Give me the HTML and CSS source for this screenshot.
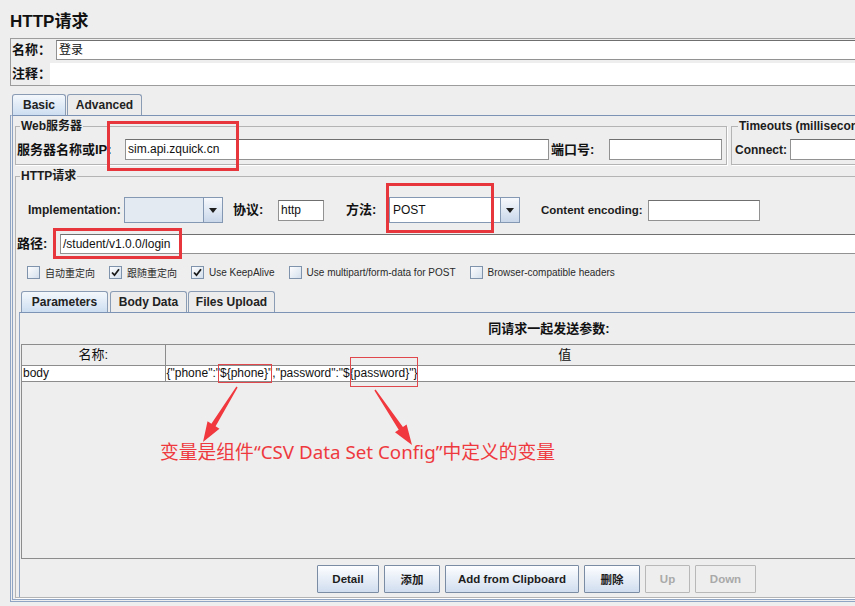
FILE: index.html
```html
<!DOCTYPE html>
<html lang="zh-CN">
<head>
<meta charset="utf-8">
<title>HTTP请求</title>
<link rel="stylesheet" href="styles.css">
</head>
<body>
<div class="app">
  <h1 class="title">HTTP请求</h1>
  <div class="namebox">
    <div class="nrow nrow-name"><span class="lbl lbl-name">名称：</span><div class="field field-name">登录</div></div>
    <div class="nrow nrow-note"><span class="lbl lbl-note">注释：</span><div class="field field-note"></div></div>
  </div>
  <div class="tabs main-tabs">
    <div class="tab active t-basic">Basic</div>
    <div class="tab t-adv">Advanced</div>
  </div>
  <div class="tabpanel">
    <div class="toprow">
      <fieldset class="fs fs-web">
        <legend>Web服务器</legend>
        <div class="row">
          <span class="lbl lbl-server">服务器名称或IP:</span>
          <div class="field field-server">sim.api.zquick.cn</div>
          <span class="lbl lbl-port">端口号:</span>
          <div class="field field-port"></div>
        </div>
      </fieldset>
      <fieldset class="fs fs-timeouts">
        <legend>Timeouts (milliseconds)</legend>
        <div class="row">
          <span class="lbl-en lbl-connect">Connect:</span>
          <div class="field field-connect"></div>
          <span class="lbl-en lbl-response">Response:</span>
          <div class="field field-connect"></div>
        </div>
      </fieldset>
    </div>
    <fieldset class="fs fs-http">
      <legend>HTTP请求</legend>
      <div class="impl-row">
        <span class="lbl-en lbl-impl">Implementation:</span>
        <div class="combo combo-impl"><div class="combo-field"></div><div class="combo-btn"><span class="caret"></span></div></div>
        <span class="lbl lbl-proto">协议:</span>
        <div class="field field-proto">http</div>
        <span class="lbl lbl-method">方法:</span>
        <div class="combo combo-method"><div class="combo-field">POST</div><div class="combo-btn"><span class="caret"></span></div></div>
        <span class="lbl-en lbl-enc">Content encoding:</span>
        <div class="field field-enc"></div>
      </div>
      <div class="path-row">
        <span class="lbl lbl-path">路径:</span>
        <div class="field field-path">/student/v1.0.0/login</div>
      </div>
      <div class="checks">
        <div class="chk"><span class="box"></span><span>自动重定向</span></div>
        <div class="chk"><span class="box"><svg width="9" height="9" viewBox="0 0 9 9"><path d="M1 4.5 L3.5 7.2 L8 1.2" fill="none" stroke="#1a1a1a" stroke-width="1.8"/></svg></span><span>跟随重定向</span></div>
        <div class="chk"><span class="box"><svg width="9" height="9" viewBox="0 0 9 9"><path d="M1 4.5 L3.5 7.2 L8 1.2" fill="none" stroke="#1a1a1a" stroke-width="1.8"/></svg></span><span>Use KeepAlive</span></div>
        <div class="chk"><span class="box"></span><span>Use multipart/form-data for POST</span></div>
        <div class="chk"><span class="box"></span><span>Browser-compatible headers</span></div>
      </div>
      <div class="tabs inner-tabs">
        <div class="tab active t-params">Parameters</div>
        <div class="tab t-body">Body Data</div>
        <div class="tab t-files">Files Upload</div>
      </div>
      <div class="innerpanel">
        <div class="param-title">同请求一起发送参数:</div>
        <div class="tablewrap">
          <table class="params">
            <colgroup><col class="c-name"><col></colgroup>
            <thead><tr><th>名称:</th><th>值</th></tr></thead>
            <tbody><tr><td>body</td><td>{"phone":"${phone}","password":"${password}"}</td></tr></tbody>
          </table>
        </div>
        <div class="buttons">
          <button type="button" class="btn btn-detail">Detail</button>
          <button type="button" class="btn btn-add">添加</button>
          <button type="button" class="btn btn-clip">Add from Clipboard</button>
          <button type="button" class="btn btn-del">删除</button>
          <button type="button" class="btn btn-up disabled">Up</button>
          <button type="button" class="btn btn-down disabled">Down</button>
        </div>
      </div>
    </fieldset>
  </div>
</div>
<svg class="marks" viewBox="0 0 855 606" xmlns="http://www.w3.org/2000/svg">
  <g fill="none" stroke="#e8363d" stroke-width="3">
    <rect x="108.5" y="122.5" width="129" height="47"/>
    <rect x="387.5" y="184.5" width="105" height="47"/>
    <rect x="54.5" y="229.5" width="126" height="28"/>
  </g>
  <g fill="none" stroke="#e0474d" stroke-width="1">
    <rect x="218.5" y="364.5" width="53" height="18"/>
    <rect x="350.5" y="357.5" width="67" height="29"/>
  </g>
  <g fill="#f0383e">
    <polygon points="237.6,387.4 215.6,426.3 219.45,428.7 203,442 207.55,421.3 211.4,423.7 236.4,386.6"/>
    <polygon points="375.6,389.6 402.9,427 406.6,424.5 412,445 395,432.3 398.7,429.8 374.4,390.4"/>
  </g>
</svg>
<div class="note">变量是组件“CSV Data Set Config”中定义的变量</div>
</body>
</html>
```
FILE: styles.css
```css
* { box-sizing: border-box; }
html, body { margin: 0; padding: 0; }
body {
  width: 855px;
  height: 606px;
  overflow: hidden;
  position: relative;
  background: #eeeeee;
  color: #1c1c1c;
  font-family: "Liberation Sans", "Noto Sans CJK SC", sans-serif;
  font-size: 12px;
}
.app { width: 1090px; }

.title {
  margin: 0;
  height: 38px;
  padding: 12px 0 0 10px;
  font-size: 17px;
  line-height: 20px;
  font-weight: bold;
  color: #111;
}

/* name / comment box */
.namebox {
  margin-left: 10px;
  border: 1px solid #9c9c9c;
  border-right: 0;
  padding-top: 1px;
}
.nrow { display: flex; align-items: center; }
.nrow-note { margin-top: 3px; }
.lbl {
  flex: none;
  font-weight: bold;
  font-size: 13px;
  line-height: 16px;
  white-space: nowrap;
  color: #111;
}
.lbl-en {
  flex: none;
  font-weight: bold;
  font-size: 12px;
  line-height: 16px;
  white-space: nowrap;
  color: #1c1c1c;
}
.lbl-name { width: 45px; padding-left: 1px; }
.lbl-note { width: 39px; padding-left: 1px; }

.field {
  flex: none;
  height: 21px;
  background: #fff;
  border: 1px solid #929292;
  border-top-color: #6f6f6f;
  padding: 0 2px;
  line-height: 19px;
  white-space: nowrap;
  overflow: hidden;
  color: #111;
  font-size: 12px;
}
.field-name { flex: 1; height: 20px; line-height: 18px; }
.field-note { flex: 1; height: 22px; border: 0; }

/* tabs */
.tabs { display: flex; align-items: flex-end; }
.main-tabs { margin-top: 8px; padding-left: 12px; height: 21px; }
.tab {
  height: 21px;
  padding: 0;
  border: 1px solid #8a9bb4;
  border-bottom: 0;
  border-radius: 3px 3px 0 0;
  background: #ececec;
  font-weight: bold;
  font-size: 12px;
  line-height: 20px;
  color: #222;
  margin-right: 1px;
  text-align: center;
  white-space: nowrap;
}
.tab.active { background: linear-gradient(#f4f8fc, #cddef1); }
.t-basic { width: 54px; }
.t-adv { width: 75px; }

.tabpanel {
  margin-left: 10px;
  border-top: 1px solid #7d93b5;
  border-left: 3px double #8fa3c3;
  border-bottom: 3px double #8fa3c3;
  padding: 4px 0 1px 2px;
}

/* fieldsets */
.toprow { display: flex; gap: 4px; }
.fs {
  margin: 0;
  min-width: 0;
  border: 1px solid #b4b4b4;
  box-shadow: 1px 1px 0 #fff;
  padding: 0 4px 4px 1px;
}
.fs legend {
  margin-left: 3px;
  padding: 0 1px;
  font-weight: bold;
  font-size: 12px;
  line-height: 13px;
  color: #1c1c1c;
}
.fs-web { width: 712px; flex: none; }
.fs-timeouts { flex: 1; padding-left: 3px; }
.row { display: flex; align-items: center; height: 21px; margin-top: 6px; }
.lbl-server { width: 108px; }
.field-server { flex: 1; }
.lbl-port { width: 58px; margin-left: 2px; }
.field-port { width: 113px; }
.lbl-connect { width: 55px; }
.field-connect { width: 100px; }
.lbl-response { width: 65px; margin-left: 6px; }

.fs-http { margin-top: 5px; padding: 0 0 0 1px; width: 1075px; }

.impl-row { display: flex; align-items: center; height: 26px; margin-top: 14px; padding-left: 11px; }
.lbl-impl { width: 96px; }
.combo { flex: none; display: flex; height: 26px; border: 1px solid #8497b3; }
.combo-impl { width: 99px; }
.combo-field { flex: 1; background: #e4eaf2; }
.combo-method { width: 131px; }
.combo-method .combo-field { background: #fff; line-height: 24px; padding-left: 3px; color: #111; }
.combo-btn {
  width: 19px;
  border-left: 1px solid #8497b3;
  background: linear-gradient(#f7f9fc, #c9d7ea);
  display: flex;
  align-items: center;
  justify-content: center;
}
.caret {
  width: 0;
  height: 0;
  border-left: 4.5px solid transparent;
  border-right: 4.5px solid transparent;
  border-top: 5px solid #1e1e1e;
}
.lbl-proto { width: 45px; margin-left: 10px; }
.field-proto { width: 46px; }
.lbl-method { width: 43px; margin-left: 22px; }
.lbl-enc { width: 107px; margin-left: 21px; font-size: 11.5px; }
.field-enc { width: 112px; }

.path-row { display: flex; align-items: center; height: 20px; margin-top: 11px; }
.lbl-path { width: 43px; }
.field-path { flex: 1; height: 20px; line-height: 18px; }

/* checkboxes */
.checks { display: flex; align-items: center; gap: 14px; height: 13px; margin-top: 12px; padding-left: 10px; }
.chk { display: flex; align-items: center; gap: 5px; font-size: 10px; color: #2a2a2a; white-space: nowrap; }
.box {
  width: 13px;
  height: 13px;
  border: 1px solid #8093ad;
  background: linear-gradient(135deg, #fdfdfe, #d3dfec);
  display: flex;
  align-items: center;
  justify-content: center;
}

/* parameters tabs */
.inner-tabs { margin-top: 12px; padding-left: 4px; height: 21px; }
.t-params { width: 87px; margin-right: 2px; }
.t-body { width: 77px; }
.t-files { width: 87px; }

.innerpanel {
  margin-left: 2px;
  width: 1058px;
  border-top: 1px solid #7d93b5;
  border-left: 1px solid #8fa3c3;
  padding: 0 0 4px 1px;
}
.param-title { height: 31px; line-height: 31px; text-align: center; font-weight: bold; font-size: 13px; color: #111; }
.tablewrap { width: 944px; height: 215px; border: 1px solid #8c8c8c; border-right: 0; }
.params { width: 943px; border-collapse: collapse; table-layout: fixed; }
.c-name { width: 143px; }
.params th {
  height: 20px;
  padding: 0;
  background: #eeeeee;
  font-weight: normal;
  font-size: 13px;
  line-height: 16px;
  color: #111;
  border-right: 1px solid #8c8c8c;
  border-bottom: 1px solid #8c8c8c;
}
.params td {
  height: 16px;
  padding: 0 0 0 1px;
  background: #fff;
  font-size: 12px;
  line-height: 15px;
  white-space: nowrap;
  overflow: hidden;
  color: #111;
  border-right: 1px solid #8c8c8c;
  border-bottom: 1px solid #8c8c8c;
}

/* buttons */
.buttons { display: flex; gap: 5px; margin-top: 6px; padding-left: 296px; height: 28px; }
.btn {
  height: 28px;
  padding: 0;
  border: 1px solid #7a8ca4;
  border-radius: 1px;
  background: linear-gradient(#fdfeff, #d0ddef);
  font-family: "Liberation Sans", "Noto Sans CJK SC", sans-serif;
  font-weight: bold;
  font-size: 11.5px;
  color: #1c1c1c;
}
.btn-detail { width: 62px; }
.btn-add { width: 56px; }
.btn-clip { width: 134px; }
.btn-del { width: 56px; }
.btn-up { width: 45px; }
.btn-down { width: 61px; }
.btn.disabled { background: #eeeeee; border-color: #b8b8b8; color: #a9a9a9; }

/* annotations */
.marks { position: absolute; left: 0; top: 0; width: 855px; height: 606px; pointer-events: none; }
.note {
  position: absolute;
  left: 160px;
  top: 442px;
  font-family: "Noto Sans", "Noto Sans CJK SC", sans-serif;
  font-size: 18.8px;
  line-height: 21px;
  color: #ee3a3f;
  white-space: nowrap;
}
```
